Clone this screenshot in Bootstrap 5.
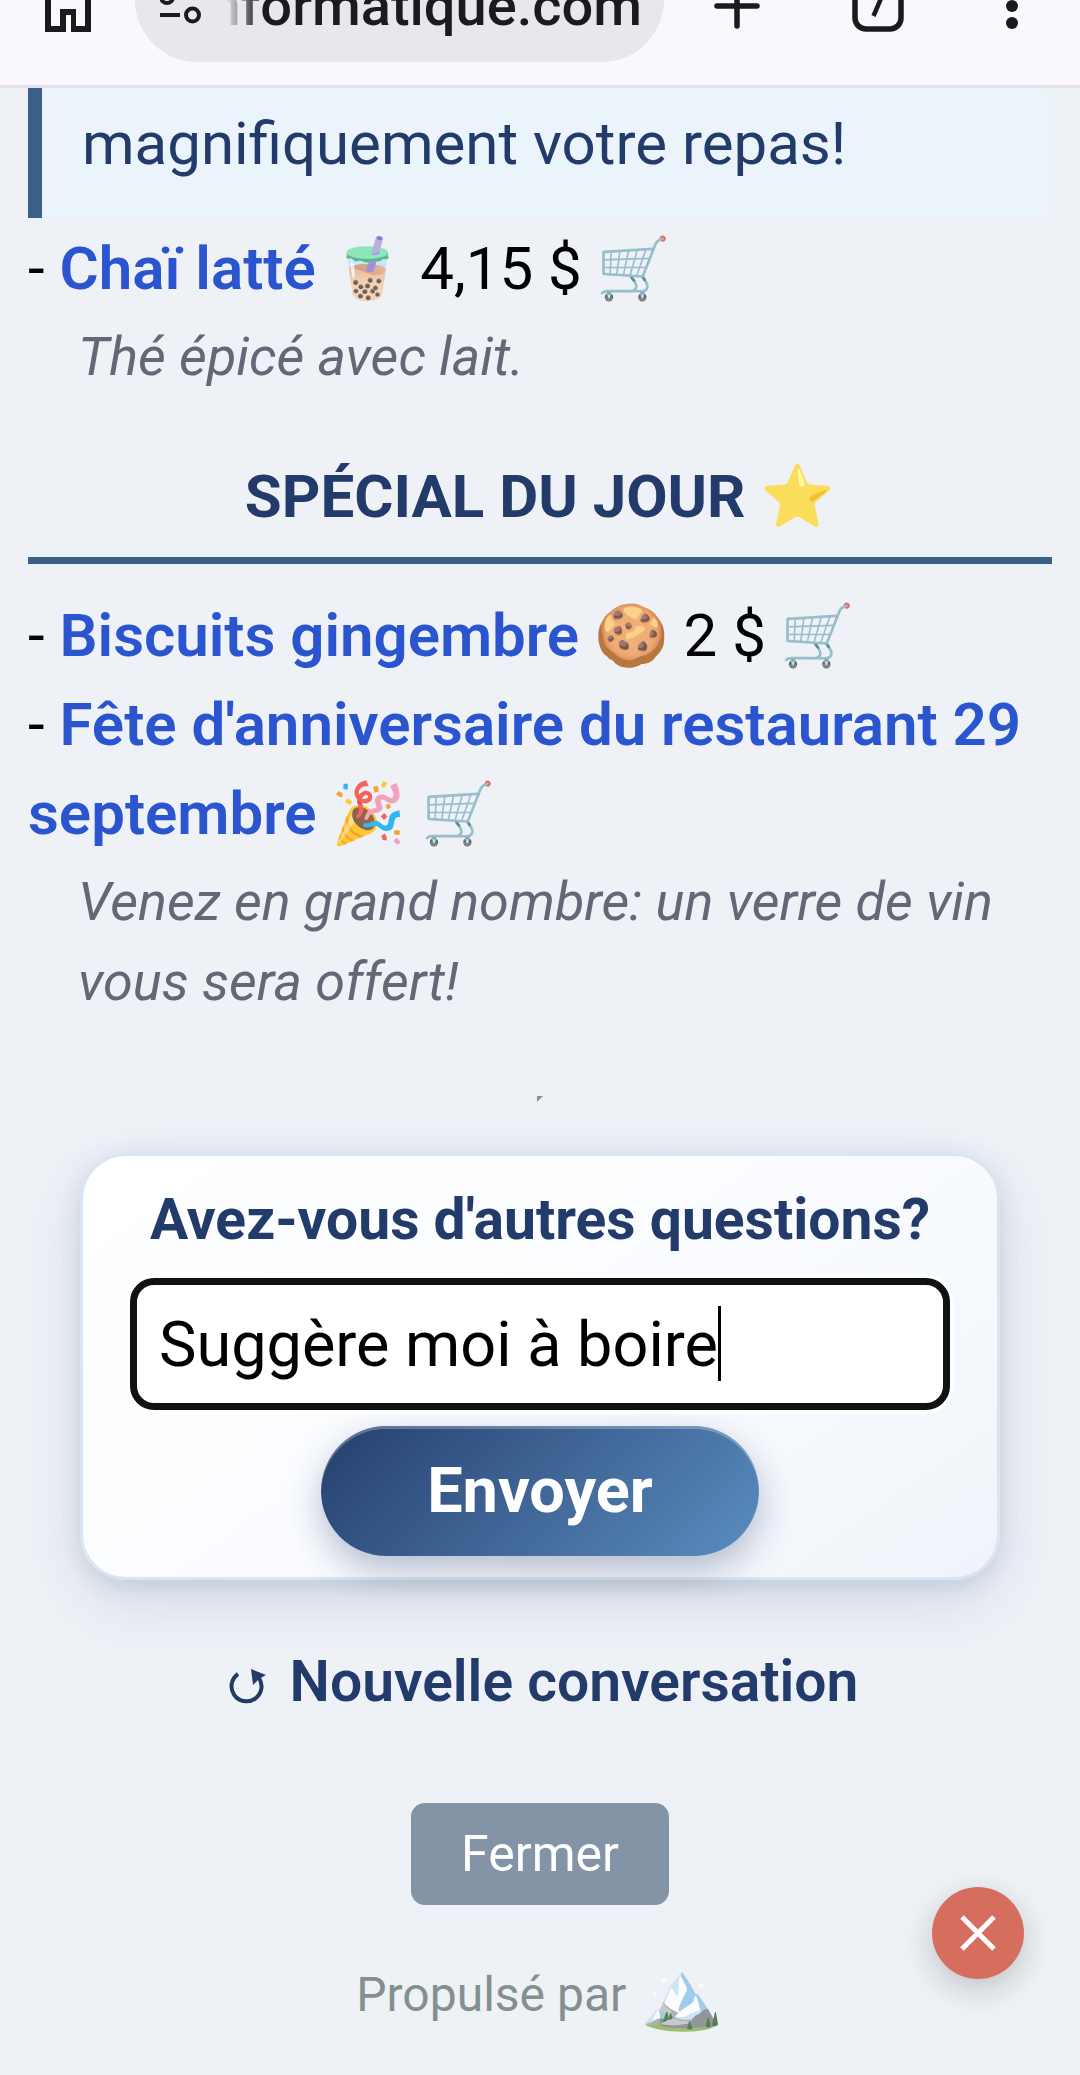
<!DOCTYPE html>
<html lang="fr">
<head>
<meta charset="utf-8">
<meta name="viewport" content="width=device-width, initial-scale=1">
<title>Menu du restaurant</title>
<link rel="stylesheet" href="https://cdn.jsdelivr.net/npm/bootstrap@5.3.0/dist/css/bootstrap.min.css">
<style>
  :root { --navy: #233b6a; --steel: #3b6087; }
  body { background: #eef2f7; color: #000; font-family: Roboto, "Noto Sans", "Noto Color Emoji", sans-serif; font-size: 60px; line-height: 89px; }
  .browser-bar { background: #faf7fe; border-bottom: 3px solid #e2e2e7; padding: 0 62px 23px 45px; }
  .browser-row { height: 124px; margin-top: -62px; }
  .browser-row a, .browser-row button { line-height: 0; border: 0; padding: 0; background: none; color: #1b1b1f; }
  .browser-row svg { height: 64px; display: block; }
  .address { height: 124px; border-radius: 62px; background: #e8e7ec; margin: 0 50px 0 44px; padding: 12px 22px 0 25px; color: #1b1b1f; min-width: 0; }
  .address svg { margin-top: -12px; }
  .address-text { font-size: 56px; line-height: 72px; font-weight: 500; margin-left: 23px; min-width: 0; -webkit-mask-image: linear-gradient(90deg, transparent, #000 36px); mask-image: linear-gradient(90deg, transparent, #000 36px); }
  .tabs-btn { margin: 0 102px 0 92px; }
  main { padding: 0 28px; }
  .chef-note { background: #ebf3fb; border-left: 14px solid var(--steel); border-radius: 0 18px 18px 0; color: var(--navy); padding: 11px 40px 30px; margin-bottom: 6px; }
  .dish a { color: #2b55cf; font-weight: 600; text-decoration: none; }
  .emo { opacity: .8; }
  .dish-note { color: #666677; font-style: italic; font-size: 54px; line-height: 80px; margin: 4px 50px 0; }
  .menu-title { color: var(--navy); font-size: 60px; line-height: 89px; font-weight: 700; border-bottom: 7px solid var(--steel); padding-bottom: 16px; margin: 55px 0 27px; }
  .tick { display: block; margin: 74px auto 51px; }
  .ask-box { background: linear-gradient(145deg, #fff 0%, #fafcff 50%, #f0f4fa 100%); border: 3px solid #d9e5f3; border-radius: 46px; padding: 24px 47px 21px; margin: 0 52px; box-shadow: 0 22px 65px rgba(36,59,107,.12), 0 6px 22px rgba(36,59,107,.13); }
  .ask-box label { color: var(--navy); font-size: 57px; line-height: 80px; font-weight: 700; margin-bottom: 18px; }
  .ask-input { width: 100%; height: 132px; border: 7px solid #101111; border-radius: 24px; background: #fff; color: #000; font-size: 63px; padding: 0 22px; outline: 0; box-shadow: 0 0 0 4px #fff; }
  .caret { left: 588px; top: 28px; width: 3px; height: 75px; background: #000; }
  .send-btn { height: 130px; border: 0; border-radius: 65px; padding: 0 106px; margin-top: 16px; color: #fff; font-size: 63px; font-weight: 700; line-height: 80px; background: linear-gradient(135deg, #253f6e, #5a8dbf); box-shadow: 0 14px 36px rgba(36,59,107,.32), inset 0 3px 0 rgba(255,255,255,.25); }
  .reset-link { color: var(--navy); font-size: 57px; line-height: 80px; font-weight: 600; text-decoration: none; margin-top: 62px; padding-left: 6px; }
  .reset-link svg { width: 40px; height: 40px; margin: 10px 22px 0 0; }
  .close-btn { height: 102px; border: 0; border-radius: 14px; background: #8494a7; color: #fff; font-size: 50px; line-height: 60px; padding: 0 50px; margin-top: 81px; }
  .powered { color: #84908f; font-size: 48px; line-height: 70px; margin: 55px 0 44px; }
  .powered .peak { font-size: 67px; line-height: 70px; margin-left: 14px; }
  .float-close { right: 56px; bottom: 96px; width: 92px; height: 92px; border: 0; border-radius: 50%; background: #d66e5f; box-shadow: 0 10px 32px rgba(0,0,0,.2); }
</style>
</head>
<body>
<header class="browser-bar overflow-hidden">
  <div class="browser-row d-flex align-items-center">
    <a href="#" aria-label="Accueil"><svg width="46" viewBox="45 -32 46 64"><path fill="currentColor" fill-rule="evenodd" d="M45-10 68-28 91-10V32H71V15H66V32H45ZM51-7V26H60V9H76V26H85V-7L68-20Z"/></svg></a>
    <div class="address d-flex align-items-center flex-grow-1">
      <svg class="flex-shrink-0" width="42" viewBox="160 -32 42 64" fill="none" stroke="currentColor" stroke-width="4"><circle cx="167" cy="-3" r="6"/><path d="M160 15H180M180-3H201"/><circle cx="192.500" cy="15" r="6.500"/></svg>
      <div class="address-text d-flex justify-content-end flex-grow-1 overflow-hidden">nformatique.com</div>
    </div>
    <button type="button" aria-label="Nouvel onglet"><svg width="46" viewBox="714 -32 46 64" stroke="currentColor" stroke-width="5.500" stroke-linecap="round"><path d="M717 6H757M737-14V26"/></svg></button>
    <button type="button" class="tabs-btn" aria-label="Onglets"><svg width="52" viewBox="852 -32 52 64"><rect x="855" y="-17" width="46" height="46" rx="11" fill="none" stroke="currentColor" stroke-width="5.500"/><path d="M867-11H885L873.500 16" fill="none" stroke="currentColor" stroke-width="4.500"/></svg></button>
    <button type="button" aria-label="Menu"><svg width="12" viewBox="1006 -32 12 64" fill="currentColor"><circle cx="1012" cy="-11" r="6"/><circle cx="1012" cy="6" r="6"/><circle cx="1012" cy="23" r="6"/></svg></button>
  </div>
</header>

<main>
  <div class="chef-note">magnifiquement votre repas!</div>
  <div class="dish">- <a href="#">Chaï latté</a> <span class="emo">🧋</span> 4,15 $ <span class="emo">🛒</span></div>
  <p class="dish-note">Thé épicé avec lait.</p>

  <h2 class="menu-title text-center">SPÉCIAL DU JOUR <span class="emo">⭐</span></h2>
  <div class="dish">- <a href="#">Biscuits gingembre</a> <span class="emo">🍪</span> 2 $ <span class="emo">🛒</span></div>
  <div class="dish">- <a href="#">Fête d'anniversaire du restaurant 29 septembre</a> <span class="emo">🎉</span> <span class="emo">🛒</span></div>
  <p class="dish-note">Venez en grand nombre: un verre de vin vous sera offert!</p>

  <svg class="tick" width="6" height="6" viewBox="0 0 6 6"><path d="M0 0H6L0 6Z" fill="#8f9194"/></svg>

  <form class="ask-box text-center" onsubmit="return false">
    <label for="question" class="d-block">Avez-vous d'autres questions?</label>
    <div class="position-relative d-flex">
      <input id="question" class="ask-input" type="text" value="Suggère moi à boire">
      <span class="caret position-absolute"></span>
    </div>
    <button type="submit" class="send-btn d-block mx-auto">Envoyer</button>
  </form>

  <div class="d-flex flex-column align-items-center">
    <a href="#" class="reset-link d-flex align-items-center"><svg viewBox="0 0 40 40"><path d="M10 7A15 15 0 1 0 31 11" fill="none" stroke="currentColor" stroke-width="4"/><path d="M23 2 38 8 31 12 25 18Z" fill="currentColor"/></svg>Nouvelle conversation</a>
    <button type="button" class="close-btn">Fermer</button>
    <div class="powered d-flex align-items-center">Propulsé par <span class="emo peak">🏔️</span></div>
  </div>
</main>

<button type="button" class="float-close position-fixed d-flex align-items-center justify-content-center p-0" aria-label="Fermer la fenêtre"><svg width="36" height="36" viewBox="0 0 36 36" stroke="#fff" stroke-width="5"><path d="M2 2 34 34M34 2 2 34"/></svg></button>
<script src="https://cdn.jsdelivr.net/npm/bootstrap@5.3.0/dist/js/bootstrap.bundle.min.js"></script>
</body>
</html>
